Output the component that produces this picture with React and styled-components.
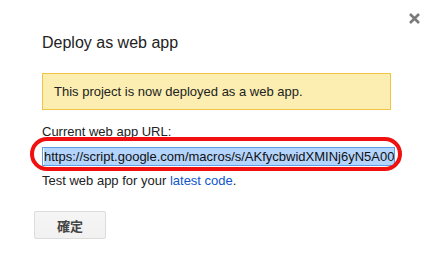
import React from 'react'
import styled, { createGlobalStyle } from 'styled-components'

const GlobalStyle = createGlobalStyle`
  body {
    margin: 0;
    background: #fff;
    font-family: "Liberation Sans", Arial, sans-serif;
    color: #222;
  }
`

const Dialog = styled.div`
  position: relative;
  width: 437px;
  height: 262px;
  box-sizing: border-box;
  padding: 34px 46px 0 42px;
`

const Close = styled.button`
  position: absolute;
  top: 12px;
  right: 16px;
  width: 13px;
  height: 13px;
  padding: 0;
  border: none;
  background: none;
  cursor: pointer;
  display: flex;
`

const Title = styled.h2`
  margin: 0;
  font-size: 16px;
  line-height: 18px;
  font-weight: normal;
  color: #222;
`

const Notice = styled.div`
  margin-top: 21px;
  padding: 10px 11px 9px;
  border: 1px solid #f3c344;
  background: #fbeeb0;
  font-size: 13px;
  line-height: 16px;
`

const Label = styled.div`
  margin-top: 14px;
  font-size: 13px;
  line-height: 16px;
`

const UrlWrap = styled.div`
  position: relative;
  margin-top: 7px;
`

const UrlField = styled.div`
  height: 17px;
  width: 350px;
  box-sizing: content-box;
  border: 1px solid #5b9de6;
  padding: 0 0 0 1px;
  overflow: hidden;
  white-space: nowrap;
  font-size: 13px;
  line-height: 17px;
  color: #111;
`

const Selected = styled.span`
  background: #b3d4fc;
  display: inline-block;
  height: 17px;
`

const Ring = styled.span`
  position: absolute;
  top: -10px;
  bottom: -5px;
  left: -12px;
  right: -11px;
  border: 4px solid #f01010;
  border-radius: 20px;
  pointer-events: none;
`

const Hint = styled.div`
  margin-top: 7px;
  font-size: 13px;
  line-height: 16px;
  a {
    color: #15c;
    text-decoration: none;
  }
`

const Actions = styled.div`
  margin: 22px 0 0 -8px;
  display: flex;
`

const Button = styled.button`
  width: 72px;
  height: 28px;
  border: 1px solid #dcdcdc;
  border-radius: 2px;
  background: linear-gradient(#f5f5f5, #f1f1f1);
  color: #444;
  font-family: "Liberation Sans", "Noto Sans CJK JP", sans-serif;
  font-size: 13px;
  font-weight: bold;
  cursor: pointer;
`

function App() {
  return (
    <>
      <GlobalStyle />
      <Dialog>
        <Close aria-label='Close'>
          <svg width='13' height='13' viewBox='0 0 13 13'>
            <path
              d='M2 2 L11 11 M11 2 L2 11'
              stroke='#7a7a7a'
              strokeWidth='2.6'
            />
          </svg>
        </Close>
        <Title>Deploy as web app</Title>
        <Notice>This project is now deployed as a web app.</Notice>
        <Label>Current web app URL:</Label>
        <UrlWrap>
          <UrlField>
            <Selected>https://script.google.com/macros/s/AKfycbwidXMINj6yN5A00</Selected>
          </UrlField>
          <Ring />
        </UrlWrap>
        <Hint>
          Test web app for your <a href='#'>latest code</a>.
        </Hint>
        <Actions>
          <Button>確定</Button>
        </Actions>
      </Dialog>
    </>
  )
}

export default App
